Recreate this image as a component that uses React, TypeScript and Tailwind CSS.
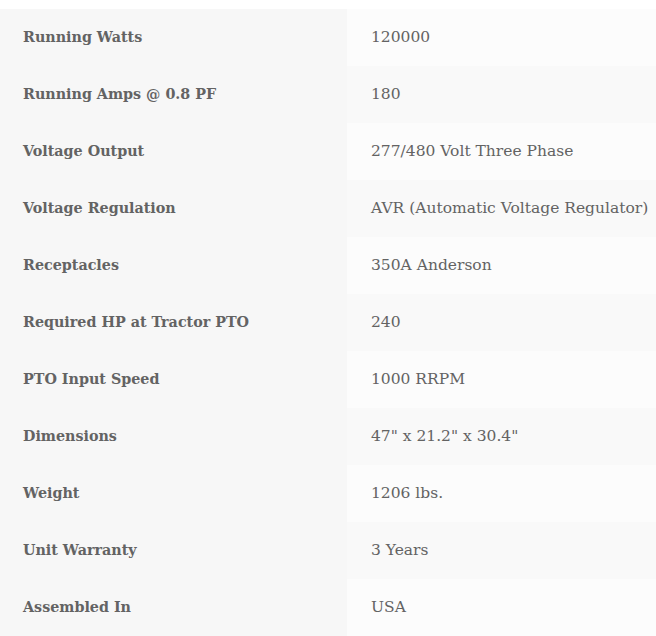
const specs: [string, string][] = [
  ['Running Watts', '120000'],
  ['Running Amps @ 0.8 PF', '180'],
  ['Voltage Output', '277/480 Volt Three Phase'],
  ['Voltage Regulation', 'AVR (Automatic Voltage Regulator)'],
  ['Receptacles', '350A Anderson'],
  ['Required HP at Tractor PTO', '240'],
  ['PTO Input Speed', '1000 RRPM'],
  ['Dimensions', '47" x 21.2" x 30.4"'],
  ['Weight', '1206 lbs.'],
  ['Unit Warranty', '3 Years'],
  ['Assembled In', 'USA'],
];

export default function App() {
  return (
    <div className="bg-white pt-[9px] w-[656px] font-['DejaVu_Serif',serif] text-[#636363]">
      {specs.map(([label, value], i) => (
        <div key={label} className="flex h-[57px]">
          <div className="w-[347px] shrink-0 bg-[#f7f7f7] pl-[23px] flex items-center font-bold text-[14.3px]">
            {label}
          </div>
          <div
            className={`flex-1 pl-[24px] flex items-center whitespace-nowrap text-[15.5px] ${
              i % 2 === 0 ? 'bg-[#fcfcfc]' : 'bg-[#f9f9f9]'
            }`}
          >
            {value}
          </div>
        </div>
      ))}
    </div>
  );
}
